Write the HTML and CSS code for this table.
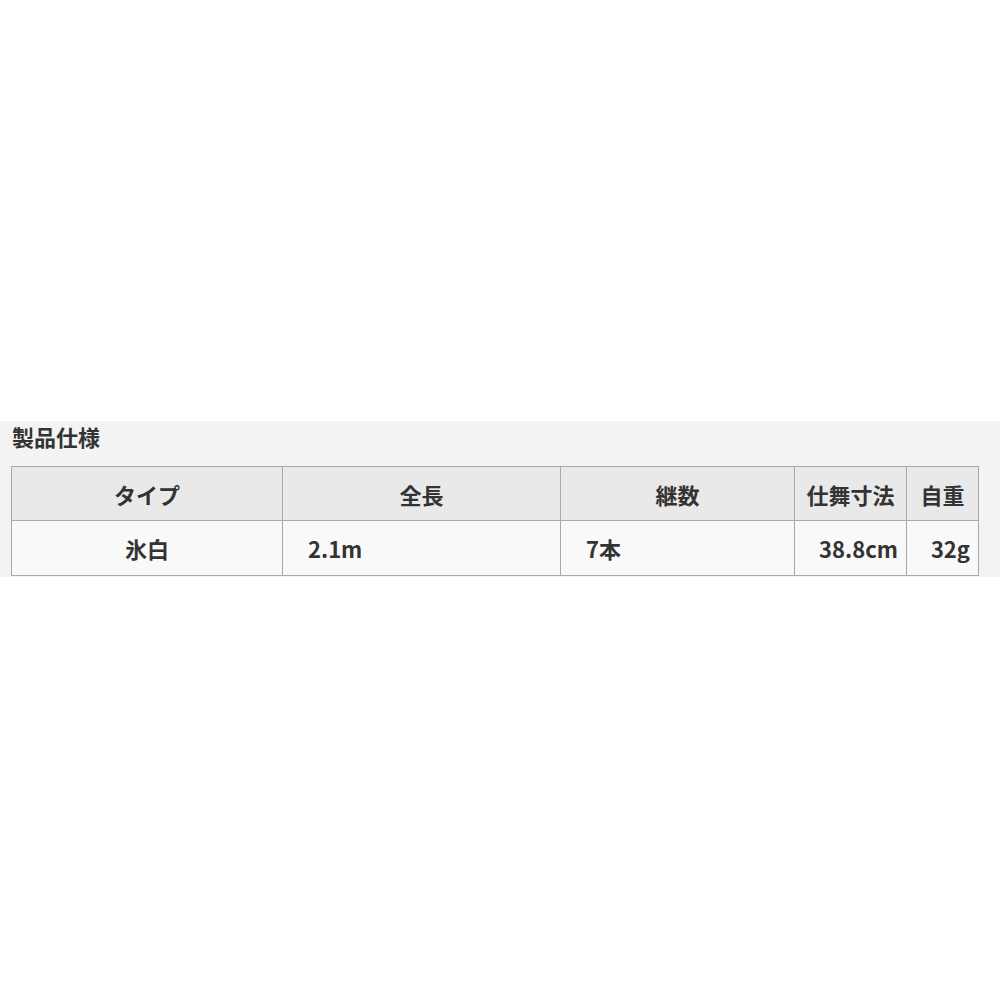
FILE: index.html
```html
<!DOCTYPE html>
<html lang="ja">
<head>
<meta charset="utf-8">
<link rel="stylesheet" href="styles.css">
</head>
<body>
<section class="spec">
  <h2 class="spec-title">製品仕様</h2>
  <table class="spec-table">
    <colgroup>
      <col class="c1"><col class="c2"><col class="c3"><col class="c4"><col class="c5">
    </colgroup>
    <thead>
      <tr>
        <th>タイプ</th>
        <th>全長</th>
        <th>継数</th>
        <th>仕舞寸法</th>
        <th>自重</th>
      </tr>
    </thead>
    <tbody>
      <tr>
        <td class="center">氷白</td>
        <td class="left">2.1m</td>
        <td class="left">7本</td>
        <td class="right">38.8cm</td>
        <td class="right">32g</td>
      </tr>
    </tbody>
  </table>
</section>
</body>
</html>
```
FILE: styles.css
```css
html, body {
  margin: 0;
  padding: 0;
  background: #ffffff;
}
body {
  font-family: "Noto Sans CJK JP", "Noto Sans", sans-serif;
  color: #333333;
}
.spec {
  margin-top: 421px;
  background: #f3f3f3;
  padding: 0 0 1px 11px;
}
.spec-title {
  margin: 0;
  height: 45px;
  line-height: 30px;
  font-size: 22px;
  font-weight: 700;
  padding-left: 1px;
}
.spec-table {
  border-collapse: collapse;
  table-layout: fixed;
  width: 967px;
  font-size: 22px;
}
.c1 { width: 271px; }
.c2 { width: 278px; }
.c3 { width: 234px; }
.c4 { width: 112px; }
.c5 { width: 72px; }
.spec-table th,
.spec-table td {
  border: 1px solid #a9a9a9;
  padding: 0;
  white-space: nowrap;
  overflow: hidden;
  font-weight: 700;
}
.spec-table th {
  background: #e9e9e9;
  height: 53px;
  text-align: center;
}
.spec-table td {
  background: #f9f9f9;
  height: 54px;
}
.center { text-align: center; }
.left { text-align: left; padding-left: 25px !important; }
.right { text-align: right; padding-right: 8px !important; }
```
